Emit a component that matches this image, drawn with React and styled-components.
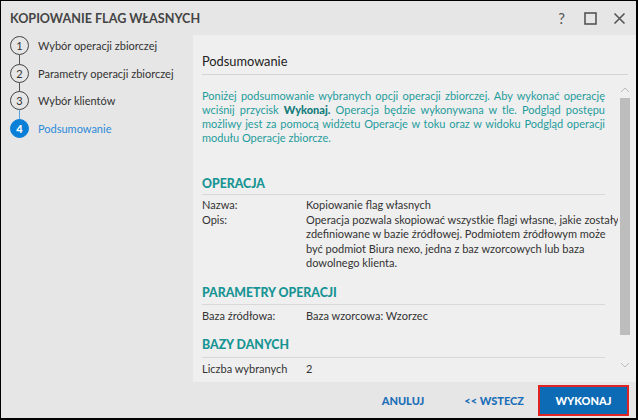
import styled, { createGlobalStyle } from 'styled-components';

const Global = createGlobalStyle`
  html, body {
    margin: 0;
    padding: 0;
    background: #000;
  }
  body {
    font-family: Lato, "Liberation Sans", sans-serif;
  }
`;

const Window = styled.div`
  width: 635px;
  height: 417px;
  margin: 1px 2px 2px 1px;
  background: #e6e6e6;
  display: flex;
  flex-direction: column;
  color: #333;
`;

const TitleBar = styled.div`
  height: 34px;
  display: flex;
  align-items: center;
  padding: 0 10px 0 9px;
  flex-shrink: 0;
`;

const Title = styled.div`
  flex: 1;
  font-size: 12.6px;
  font-weight: 700;
  color: #444;
`;

const TitleIcons = styled.div`
  display: flex;
  align-items: center;
  gap: 16px;
  color: #555;
`;

const IconBtn = styled.div`
  width: 13px;
  height: 14px;
  display: flex;
  align-items: center;
  justify-content: center;
  font-size: 15px;
`;

const Body = styled.div`
  flex: 1;
  display: flex;
  min-height: 0;
`;

const Steps = styled.div`
  width: 192px;
  flex-shrink: 0;
  box-sizing: border-box;
  margin-top: -3px;
  padding-left: 9px;
  display: flex;
  flex-direction: column;
`;

const Step = styled.div`
  position: relative;
  height: 27.5px;
  display: flex;
  align-items: center;
  gap: 9px;
  font-size: 11px;
  white-space: nowrap;
  color: ${(p) => (p.active ? '#2d8ad8' : '#333')};
`;

const Circle = styled.div`
  position: relative;
  z-index: 1;
  width: 19px;
  height: 19px;
  box-sizing: border-box;
  border-radius: 50%;
  border: 1.3px solid ${(p) => (p.active ? '#0a7fd8' : '#444')};
  background: ${(p) => (p.active ? '#0a7fd8' : '#e6e6e6')};
  color: ${(p) => (p.active ? '#fff' : '#333')};
  font-weight: ${(p) => (p.active ? 900 : 400)};
  font-size: 11px;
  display: flex;
  align-items: center;
  justify-content: center;
  flex-shrink: 0;
`;

const Connector = styled.div`
  position: absolute;
  left: 9px;
  top: -5px;
  width: 1px;
  height: 11px;
  background: ${(p) => (p.blue ? '#5aa3de' : '#555')};
`;

const Panel = styled.div`
  flex: 1;
  min-width: 0;
  background: #efefef;
  display: flex;
  flex-direction: column;
  min-height: 0;
`;

const PanelHeader = styled.div`
  margin: 0 8px 0 9px;
  padding: 16px 0 3px;
  font-size: 12.8px;
  line-height: 20px;
  color: #222;
  border-bottom: 1px solid #d4d4d4;
`;

const ScrollArea = styled.div`
  flex: 1;
  display: flex;
  min-height: 0;
  overflow: hidden;
`;

const Content = styled.div`
  flex: 1;
  min-width: 0;
  padding: 14px 13px 0 9px;
  overflow: hidden;
`;

const Intro = styled.div`
  font-size: 11px;
  line-height: 14px;
  color: #1f9c9c;
  b {
    font-weight: 900;
    color: #137c7c;
  }
`;

const Line = styled.span`
  display: block;
  text-align: ${(p) => (p.last ? 'left' : 'justify')};
  text-align-last: ${(p) => (p.last ? 'left' : 'justify')};
  white-space: nowrap;
`;

const Section = styled.div`
  margin-top: ${(p) => p.top}px;
`;

const SectionTitle = styled.div`
  font-size: 12.3px;
  line-height: 17px;
  font-weight: 900;
  color: #179494;
  padding-bottom: ${(p) => p.pb || 2}px;
  border-bottom: 1px solid #d8d8d8;
  margin-bottom: ${(p) => p.mb || 3}px;
`;

const Row = styled.div`
  display: grid;
  grid-template-columns: 104px 1fr;
  font-size: 11px;
  line-height: 14.5px;
  white-space: nowrap;
  color: #333;
`;

const Scrollbar = styled.div`
  width: 14px;
  flex-shrink: 0;
  margin-right: 4px;
  display: flex;
  flex-direction: column;
  align-items: center;
  padding-top: 10px;
`;

const Arrow = styled.div`
  height: 10px;
  display: flex;
  align-items: center;
  justify-content: center;
  color: #bbb;
`;

const Thumb = styled.div`
  width: 10px;
  height: 237px;
  background: #bdbdbd;
  margin-top: 3px;
`;

const Track = styled.div`
  flex: 1;
`;

const Footer = styled.div`
  height: 36px;
  display: flex;
  align-items: center;
  justify-content: flex-end;
  padding-right: 7px;
  flex-shrink: 0;
`;

const TextButton = styled.button`
  border: none;
  background: none;
  font-family: inherit;
  font-size: 11px;
  font-weight: 900;
  color: #1d6fb8;
  padding: 0;
  margin-right: ${(p) => p.gap}px;
`;

const PrimaryButton = styled.button`
  width: 91px;
  height: 31px;
  box-sizing: border-box;
  border: 2px solid #e02424;
  background: #0d6bb5;
  color: #fff;
  font-family: inherit;
  font-size: 11px;
  font-weight: 900;
`;

const Chevron = ({ up }) => (
  <svg width="10" height="6" viewBox="0 0 10 6">
    <path
      d={up ? 'M1 5 L5 1 L9 5' : 'M1 1 L5 5 L9 1'}
      fill="none"
      stroke="currentColor"
      strokeWidth="1"
    />
  </svg>
);

const steps = [
  'Wybór operacji zbiorczej',
  'Parametry operacji zbiorczej',
  'Wybór klientów',
  'Podsumowanie',
];

export default function App() {
  return (
    <>
      <Global />
      <Window>
        <TitleBar>
          <Title>KOPIOWANIE FLAG WŁASNYCH</Title>
          <TitleIcons>
            <IconBtn>?</IconBtn>
            <IconBtn>
              <svg width="13" height="13" viewBox="0 0 13 13">
                <rect x="1" y="1" width="11" height="11" fill="none" stroke="#555" strokeWidth="1.6" />
              </svg>
            </IconBtn>
            <IconBtn>
              <svg width="13" height="13" viewBox="0 0 13 13">
                <path d="M1.5 1.5 L11.5 11.5 M11.5 1.5 L1.5 11.5" stroke="#555" strokeWidth="1.6" />
              </svg>
            </IconBtn>
          </TitleIcons>
        </TitleBar>
        <Body>
          <Steps>
            {steps.map((s, i) => (
              <Step key={s} active={i === 3}>
                {i > 0 && <Connector blue={i === 3} />}
                <Circle active={i === 3}>{i + 1}</Circle>
                {s}
              </Step>
            ))}
          </Steps>
          <Panel>
            <PanelHeader>Podsumowanie</PanelHeader>
            <ScrollArea>
              <Content>
                <Intro>
                  <Line>Poniżej podsumowanie wybranych opcji operacji zbiorczej. Aby wykonać operację</Line>
                  <Line>
                    wciśnij przycisk <b>Wykonaj.</b> Operacja będzie wykonywana w tle. Podgląd postępu
                  </Line>
                  <Line>możliwy jest za pomocą widżetu Operacje w toku oraz w widoku Podgląd operacji</Line>
                  <Line last>modułu Operacje zbiorcze.</Line>
                </Intro>
                <Section top={30}>
                  <SectionTitle>OPERACJA</SectionTitle>
                  <Row>
                    <span>Nazwa:</span>
                    <span>Kopiowanie flag własnych</span>
                  </Row>
                  <Row>
                    <span>Opis:</span>
                    <span>
                      Operacja pozwala skopiować wszystkie flagi własne, jakie zostały
                      <br />
                      zdefiniowane w bazie źródłowej. Podmiotem źródłowym może
                      <br />
                      być podmiot Biura nexo, jedna z baz wzorcowych lub baza
                      <br />
                      dowolnego klienta.
                    </span>
                  </Row>
                </Section>
                <Section top={13}>
                  <SectionTitle pb={3} mb={4}>PARAMETRY OPERACJI</SectionTitle>
                  <Row>
                    <span>Baza źródłowa:</span>
                    <span>Baza wzorcowa: Wzorzec</span>
                  </Row>
                </Section>
                <Section top={13}>
                  <SectionTitle pb={4} mb={4}>BAZY DANYCH</SectionTitle>
                  <Row>
                    <span>Liczba wybranych</span>
                    <span>2</span>
                  </Row>
                </Section>
              </Content>
              <Scrollbar>
                <Arrow>
                  <Chevron up />
                </Arrow>
                <Thumb />
                <Track />
                <Arrow style={{ marginBottom: 12 }}>
                  <Chevron />
                </Arrow>
              </Scrollbar>
            </ScrollArea>
          </Panel>
        </Body>
        <Footer>
          <TextButton gap={40}>ANULUJ</TextButton>
          <TextButton gap={14}>&lt;&lt; WSTECZ</TextButton>
          <PrimaryButton>WYKONAJ</PrimaryButton>
        </Footer>
      </Window>
    </>
  );
}
